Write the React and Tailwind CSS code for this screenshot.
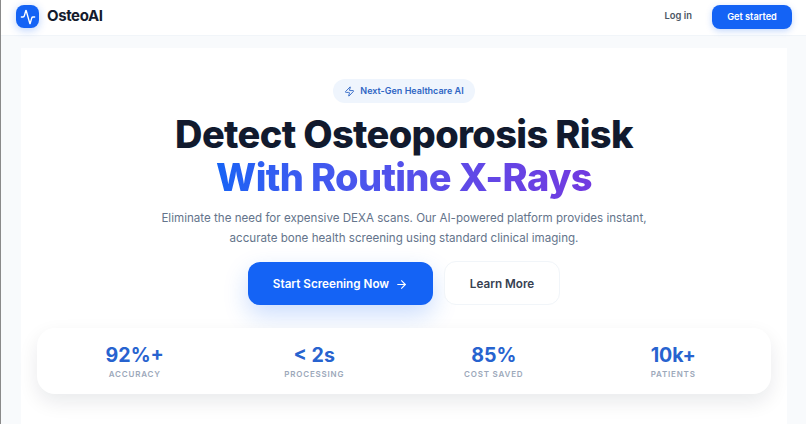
import { Activity, ArrowRight, Zap } from 'lucide-react';

const stats = [
  { value: '92%+', label: 'ACCURACY' },
  { value: '< 2s', label: 'PROCESSING' },
  { value: '85%', label: 'COST SAVED' },
  { value: '10k+', label: 'PATIENTS' },
];

export default function App() {
  return (
    <div className="h-[424px] w-[806px] overflow-hidden bg-[#f8fafc] border-l border-[#8a8a8a] font-['Inter',sans-serif]">
      {/* Header */}
      <header className="h-9 bg-white border-b border-[#f1f5f9] flex items-center justify-between pl-[15px] pr-[14px] pb-[2px]">
        <div className="flex items-center gap-2">
          <div className="w-[23px] h-[23px] rounded-lg bg-[#1463f5] flex items-center justify-center shadow-[0_2px_8px_rgba(20,99,245,0.3)]">
            <Activity size={16} strokeWidth={2} className="text-white" />
          </div>
          <span className="text-[15px] font-bold tracking-[-0.4px] text-[#141b2d]">OsteoAI</span>
        </div>
        <div className="flex items-center gap-[20px]">
          <span className="text-[9.4px] font-semibold text-[#4b5563]">Log in</span>
          <button className="w-20 h-6 rounded-lg bg-[#1463f5] text-white text-[9.2px] font-semibold shadow-[0_2px_6px_rgba(20,99,245,0.25)]">
            Get started
          </button>
        </div>
      </header>

      {/* Main card */}
      <main className="bg-white ml-5 mr-[19px] mt-3 h-[400px] flex flex-col items-center pt-[31px]">
        <div className="h-6 w-[142px] rounded-full bg-[#eff5fd] flex items-center justify-center gap-[5px] text-[#2f66c4]">
          <Zap size={11} strokeWidth={2} />
          <span className="text-[9px] font-semibold">Next-Gen Healthcare AI</span>
        </div>
        <h1 className="mt-[10px] text-[38px] leading-[43px] font-extrabold tracking-[-0.65px] text-[#111a2e] text-center">
          <div>Detect Osteoporosis Risk</div>
          <div className="bg-gradient-to-r from-[#1463f5] to-[#7139e0] bg-clip-text text-transparent w-fit mx-auto">
            With Routine X-Rays
          </div>
        </h1>
        <p className="mt-[9px] text-[11.6px] leading-5 text-[#64748b] text-center">
          Eliminate the need for expensive DEXA scans. Our AI-powered platform provides instant,
          <br />
          accurate bone health screening using standard clinical imaging.
        </p>
        <div className="mt-[13px] flex items-center gap-[11px]">
          <button className="w-[185px] h-[43px] pt-[3px] rounded-xl bg-[#1463f5] text-white text-[11.7px] font-semibold flex items-center justify-center gap-[6px] shadow-[0_10px_24px_rgba(20,99,245,0.22)]">
            Start Screening Now
            <ArrowRight size={13} strokeWidth={2} />
          </button>
          <button className="w-[116px] h-[44px] pt-[3px] rounded-xl bg-white border border-[#f1f5f9] text-[#374151] text-[11.7px] font-semibold">
            Learn More
          </button>
        </div>

        {/* Stats */}
        <div className="mt-[23px] w-[734px] h-[66px] rounded-[18px] bg-white px-2 grid grid-cols-4 shadow-[0_8px_20px_rgba(15,23,42,0.09)]">
          {stats.map(stat => (
            <div key={stat.label} className="flex flex-col items-center justify-center">
              <span className="text-[19.6px] leading-[24px] font-bold text-[#2763cf]">{stat.value}</span>
              <span className="mt-[1px] text-[8px] leading-3 font-semibold tracking-[0.8px] text-[#9ca8ba]">{stat.label}</span>
            </div>
          ))}
        </div>
      </main>
    </div>
  );
}
